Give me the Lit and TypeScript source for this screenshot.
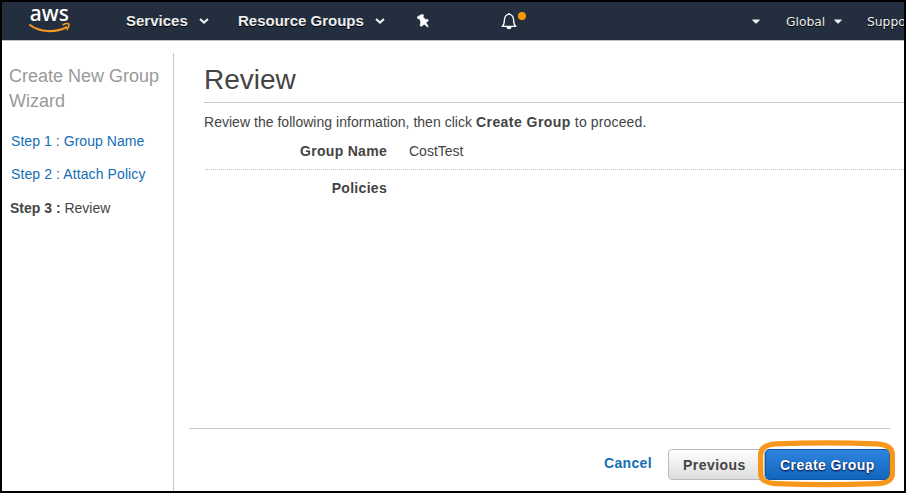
import { LitElement, html, css } from "lit";
import { customElement } from "lit/decorators.js";

const chevron = html`<svg class="chev" width="10" height="6" viewBox="0 0 10 6">
  <path d="M1 .9 5 4.6 9 .9" fill="none" stroke="#eee" stroke-width="2" />
</svg>`;

const caret = html`<svg class="caret" width="8" height="5" viewBox="0 0 8 5">
  <path d="M.3 .5H7.7V1.2L4.4 4.5H3.6L.3 1.2Z" fill="#eee" />
</svg>`;

@customElement("console-nav")
class ConsoleNav extends LitElement {
  static styles = css`
    :host {
      display: flex;
      align-items: center;
      height: 38px;
      flex: none;
      background: #232f3e;
      border-bottom: 1px solid #bfbfbf;
      color: #eee;
      overflow: hidden;
      white-space: nowrap;
      font: bold 15px/38px "Liberation Sans", Arial, sans-serif;
      text-shadow: 0 1px 0 #000;
    }
    svg { display: block; flex: none; }
    .logo { margin-left: 26px; text-shadow: none; overflow: visible; }
    .word { font: 500 22.5px "Noto Sans", sans-serif; fill: #fff; }
    .item { display: flex; align-items: center; flex: none; }
    .services { margin-left: 54px; width: 112px; }
    .groups { width: 178px; }
    .chev { margin-left: 11px; }
    .item .caret { margin-left: 9px; }
    .bell { margin-left: 70px; }
    .small { font: 12.3px/38px "DejaVu Sans", sans-serif; padding-top: 1px; }
    .account { margin-left: 215px; width: 43px; padding-top: 0; }
    .region { width: 81px; }
    .region .caret { margin-top: -1px; }
  `;

  render() {
    return html`
      <svg class="logo" width="44" height="32" viewBox="0 0 44 32">
        <text class="word" x="1.8" y="15.6" textLength="39" lengthAdjust="spacingAndGlyphs">aws</text>
        <path d="M2 20C12 27.4 27 28 38.6 22.2" fill="none" stroke="#f7981f" stroke-width="2.1" stroke-linecap="round" />
        <path d="M35 19.7C37.8 18.4 40.2 18.6 41 19.2 41.3 21.2 40.4 23.2 38.9 24.6" fill="none" stroke="#f7981f" stroke-width="1.5" stroke-linecap="round" />
      </svg>
      <div class="item services">Services ${chevron}</div>
      <div class="item groups">Resource Groups ${chevron}</div>
      <svg class="pin" width="14" height="15" viewBox="0 1 14 15">
        <path d="M1.4 3.8 5.9 1.2 7.6 2 7.1 3.7 9 6.2 11.9 6.4 12.4 7.8 10 9.8 12.4 13.5 11.6 14 8.2 11.2 5.3 13.4 4 12.5 4.7 8.9 3.6 5.9 1.4 5.4Z" fill="#fff" stroke="#fff" stroke-width=".5" />
      </svg>
      <svg class="bell" width="28" height="20" viewBox="0 0 28 20">
        <path d="M2.2 15.4C4.4 13.8 4.2 12 4.4 8.8 4.7 5.3 6 3.5 9 3.1 12 3.5 13.3 5.3 13.6 8.8 13.8 12 13.6 13.8 15.8 15.4Z" fill="none" stroke="#fff" stroke-width="1.3" stroke-linejoin="round" />
        <path d="M8.3 2h1.4v1H8.3ZM6.5 16h5c-.3 3-4.7 3-5 0Z" fill="#fff" />
        <circle cx="22" cy="5" r="4" fill="#ff9900" />
      </svg>
      <div class="item small account">${caret}</div>
      <div class="item small region">Global ${caret}</div>
      <div class="item small">Support</div>
    `;
  }
}

@customElement("wizard-steps")
class WizardSteps extends LitElement {
  static styles = css`
    :host {
      display: block;
      box-sizing: border-box;
      width: 172px;
      flex: none;
      margin-top: 12px;
      padding: 11px 0 0 7px;
      border-right: 1px solid #c8c8c8;
      font: 14px/33px "Liberation Sans", Arial, sans-serif;
      color: #444;
    }
    .title { font-size: 18px; line-height: 25px; color: #999; margin-bottom: 11px; }
    .link { color: #146eb4; padding-left: 2px; letter-spacing: 0.06px; }
    .link + .link { letter-spacing: 0.1px; }
    .now { padding: 1px 0 0 1px; }
  `;

  render() {
    return html`
      <div class="title">Create New Group<br />Wizard</div>
      <div class="link">Step 1 : Group Name</div>
      <div class="link">Step 2 : Attach Policy</div>
      <div class="now"><b>Step 3 :</b> Review</div>
    `;
  }
}

@customElement("app-root")
class AppRoot extends LitElement {
  static styles = css`
    :host {
      display: flex;
      flex-direction: column;
      box-sizing: border-box;
      width: 906px;
      height: 493px;
      border: 2px solid #000;
      background: #fff;
      overflow: hidden;
      color: #444;
      font: 14px/20px "Liberation Sans", Arial, sans-serif;
    }
    .body { display: flex; flex: 1; min-height: 0; }
    .main { flex: 1; display: flex; flex-direction: column; padding-left: 15px; }
    .review { flex: 1; margin-left: 15px; }
    .heading {
      margin: 0;
      height: 61px;
      border-bottom: 1px solid #c8c8c8;
      font-size: 28px;
      font-weight: normal;
      line-height: 78px;
    }
    .intro { margin: 9px 0 0; letter-spacing: 0.025px; }
    b, .label { font-weight: bold; letter-spacing: 0.3px; }
    .intro b { letter-spacing: 0.45px; }
    .after { letter-spacing: 0.15px; }
    .row { display: flex; gap: 22px; }
    .name { margin-top: 9px; padding-bottom: 8px; }
    .label { width: 183px; text-align: right; }
    .dots {
      height: 1px;
      margin-left: 1px;
      background: repeating-linear-gradient(90deg, #c0c0c0 0 1px, #fff 1px 2px);
    }
    .policies { margin-top: 8px; }
    .footer {
      display: flex;
      box-sizing: border-box;
      height: 63px;
      margin-right: 14px;
      border-top: 1px solid #c8c8c8;
      justify-content: flex-end;
      align-items: flex-start;
      padding-top: 20px;
      font-weight: bold;
      letter-spacing: 0.45px;
    }
    .cancel { color: #146eb4; line-height: 28px; margin-right: 16px; letter-spacing: 0.35px; }
    .btn {
      box-sizing: border-box;
      height: 31px;
      border: 1px solid #bbb;
      border-radius: 4px;
      font: inherit;
      line-height: 30px;
      letter-spacing: inherit;
      color: #444;
      padding: 0 14px;
      white-space: nowrap;
      background: linear-gradient(#fff, #ddd);
    }
    .previous { width: 97px; }
    .primary {
      position: relative;
      width: 125px;
      color: #fff;
      border-color: #0c57a5;
      background: linear-gradient(#2e85df, #1166bb);
      text-shadow: 0 1px 2px #003;
    }
    .ring { position: absolute; left: -8px; top: -10px; }
  `;

  render() {
    return html`
      <console-nav></console-nav>
      <div class="body">
        <wizard-steps></wizard-steps>
        <div class="main">
          <div class="review">
            <h1 class="heading">Review</h1>
            <p class="intro">Review the following information, then click <b>Create Group</b><span class="after"> to proceed.</span></p>
            <div class="row name"><div class="label">Group Name</div><div>CostTest</div></div>
            <div class="dots"></div>
            <div class="row policies"><div class="label">Policies</div></div>
          </div>
          <div class="footer">
            <div class="cancel">Cancel</div>
            <div class="btn previous">Previous</div>
            <div class="btn primary">
              Create Group
              <svg class="ring" width="137" height="48" viewBox="0 0 137 48">
                <path d="M18 3.8Q68 1.8 119 3.8C130 4.5 134 8 134.4 14V34C134 40 130 43 119 43.6Q68 45.8 18 43.6C7 43 3 40 2.6 34V14C3 8 7 4.5 18 3.8Z" fill="none" stroke="#f7981d" stroke-width="5.2" />
              </svg>
            </div>
          </div>
        </div>
      </div>
    `;
  }
}
